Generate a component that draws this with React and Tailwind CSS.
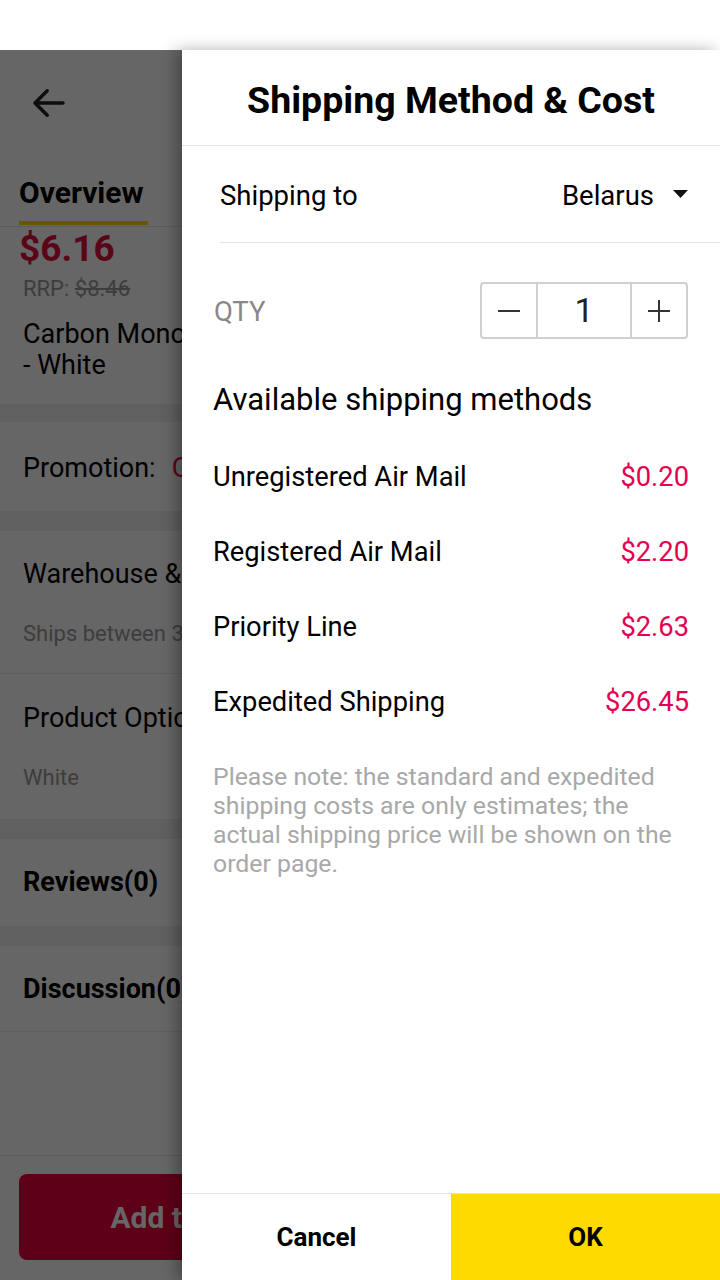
const methods = [
  { name: "Unregistered Air Mail", price: "$0.20" },
  { name: "Registered Air Mail", price: "$2.20" },
  { name: "Priority Line", price: "$2.63" },
  { name: "Expedited Shipping", price: "$26.45" },
];

function ProductPage() {
  return (
    <div className="flex flex-col h-[1230px] bg-white">
      {/* top bar with back arrow */}
      <div className="h-[105px] flex items-center pl-[28px]">
        <svg width="42" height="42" viewBox="0 0 24 24" fill="none" stroke="#222" strokeWidth="2" strokeLinecap="round" strokeLinejoin="round">
          <path d="M20 12H4M11 5l-7 7 7 7" />
        </svg>
      </div>
      {/* tabs */}
      <div className="h-[72px] border-b border-[#e6e6e6] flex items-end pl-[19px]">
        <div className="flex flex-col items-start">
          <span className="text-[30px] font-bold text-black leading-none mb-[13px]">Overview</span>
          <div className="h-[4px] w-[129px] bg-[#ffd900] mb-[1px]" />
        </div>
      </div>
      {/* price block */}
      <div className="px-[19px] pt-[2px] pb-[23px]">
        <div className="text-[37px] font-bold text-[#e0103e] leading-[40px]">$6.16</div>
        <div className="text-[22px] text-[#999] leading-[30px] mt-[5px] pl-[4px]">
          RRP: <span className="line-through">$8.46</span>
        </div>
        <div className="text-[27px] text-black leading-[31px] pl-[4px] mt-[15px] whitespace-nowrap">
          Carbon Monoxide Alarm Detector
          <br />- White
        </div>
      </div>
      <div className="h-[18px] bg-[#f0f0f0]" />
      <div className="h-[89px] flex items-center pt-[4px] px-[23px] text-[27px] whitespace-nowrap">
        <span className="text-black">Promotion:</span>
        <span className="ml-[16px] text-[#e0103e]">Coupon available</span>
      </div>
      <div className="h-[20px] bg-[#f0f0f0]" />
      <div className="px-[23px] pt-[26px] pb-[24px] border-b border-[#ececec] whitespace-nowrap">
        <div className="text-[27px] text-black leading-[34px]">Warehouse &amp; Shipping</div>
        <div className="text-[22px] text-[#999] leading-[30px] mt-[28px]">Ships between 3-5 business days</div>
      </div>
      <div className="px-[23px] pt-[27px] pb-[26px] whitespace-nowrap">
        <div className="text-[27px] text-black leading-[34px]">Product Options</div>
        <div className="text-[22px] text-[#999] leading-[30px] mt-[28px]">White</div>
      </div>
      <div className="h-[20px] bg-[#f0f0f0]" />
      <div className="h-[87px] flex items-center px-[23px] text-[27px] font-bold text-black">Reviews(0)</div>
      <div className="h-[20px] bg-[#f0f0f0]" />
      <div className="h-[86px] pt-[2px] flex items-center px-[23px] text-[27px] font-bold text-black border-b border-[#ececec]">Discussion(0)</div>
      <div className="flex-1" />
      <div className="border-t border-[#e6e6e6] px-[19px] pt-[18px] pb-[20px] flex gap-[16px]">
        <div className="w-[336px] h-[86px] rounded-[8px] bg-[#ea003c] flex items-center justify-center text-[30px] font-bold text-white">
          Add to Cart
        </div>
        <div className="flex-1 h-[86px] rounded-[8px] bg-[#ffd900] flex items-center justify-center text-[30px] font-bold text-black">
          Buy Now
        </div>
      </div>
    </div>
  );
}

function ShippingDrawer() {
  return (
    <div className="absolute top-[50px] right-0 w-[538px] h-[1230px] bg-white flex flex-col shadow-[-6px_0_14px_rgba(0,0,0,0.3)]">
      <div className="h-[96px] pt-[6px] border-b border-[#e2e2e2] flex items-center justify-center">
        <h2 className="text-[37.5px] font-bold text-black">Shipping Method &amp; Cost</h2>
      </div>
      <div className="ml-[38px] h-[97px] pt-[3px] border-b border-[#e2e2e2] flex items-center justify-between pr-[32px]">
        <span className="text-[27.5px] text-black">Shipping to</span>
        <div className="flex items-center gap-[19px]">
          <span className="text-[27.5px] text-black">Belarus</span>
          <svg width="15" height="9" viewBox="0 0 15 9" className="-mt-[2px]">
            <path d="M0 0h15L7.5 8z" fill="#111" />
          </svg>
        </div>
      </div>
      <div className="px-[32px] mt-[39px] flex items-center justify-between">
        <span className="text-[27.5px] text-[#888] pt-[3px]">QTY</span>
        <div className="flex h-[57px] border-2 border-[#d0d0d0] rounded-[4px]">
          <button className="w-[54px] flex items-center justify-center">
            <svg width="22" height="22" viewBox="0 0 22 22"><path d="M0 11h22" stroke="#333" strokeWidth="2" /></svg>
          </button>
          <div className="w-[96px] border-x-2 border-[#d0d0d0] flex items-center justify-center text-[34px] text-[#222]">1</div>
          <button className="w-[54px] flex items-center justify-center">
            <svg width="22" height="22" viewBox="0 0 22 22"><path d="M0 11h22M11 0v22" stroke="#333" strokeWidth="2" /></svg>
          </button>
        </div>
      </div>
      <div className="px-[31px] mt-[41px] text-[31px] text-black leading-[40px]">Available shipping methods</div>
      <div className="flex flex-col mt-[20px]">
        {methods.map((m) => (
          <div key={m.name} className="h-[75px] px-[31px] flex items-center justify-between text-[27.3px]">
            <span className="text-black">{m.name}</span>
            <span className="text-[#e5004f]">{m.price}</span>
          </div>
        ))}
      </div>
      <p className="px-[31px] mt-[22px] text-[24.8px] leading-[29px] text-[#a8a8a8]">
        Please note: the standard and expedited shipping costs are only estimates; the actual shipping price will be shown on the order page.
      </p>
      <div className="flex-1" />
      <div className="h-[87px] border-t border-[#e2e2e2] flex">
        <button className="flex-1 bg-white text-[26px] font-bold text-black">Cancel</button>
        <button className="flex-1 bg-[#ffd900] text-[26px] font-bold text-black">OK</button>
      </div>
    </div>
  );
}

export default function App() {
  return (
    <div className="relative w-[720px] h-[1280px] overflow-hidden bg-white font-['Roboto',sans-serif]">
      <div className="h-[50px] bg-white" />
      <div className="relative">
        <ProductPage />
        <div className="absolute inset-0 bg-black/60" />
      </div>
      <ShippingDrawer />
    </div>
  );
}
